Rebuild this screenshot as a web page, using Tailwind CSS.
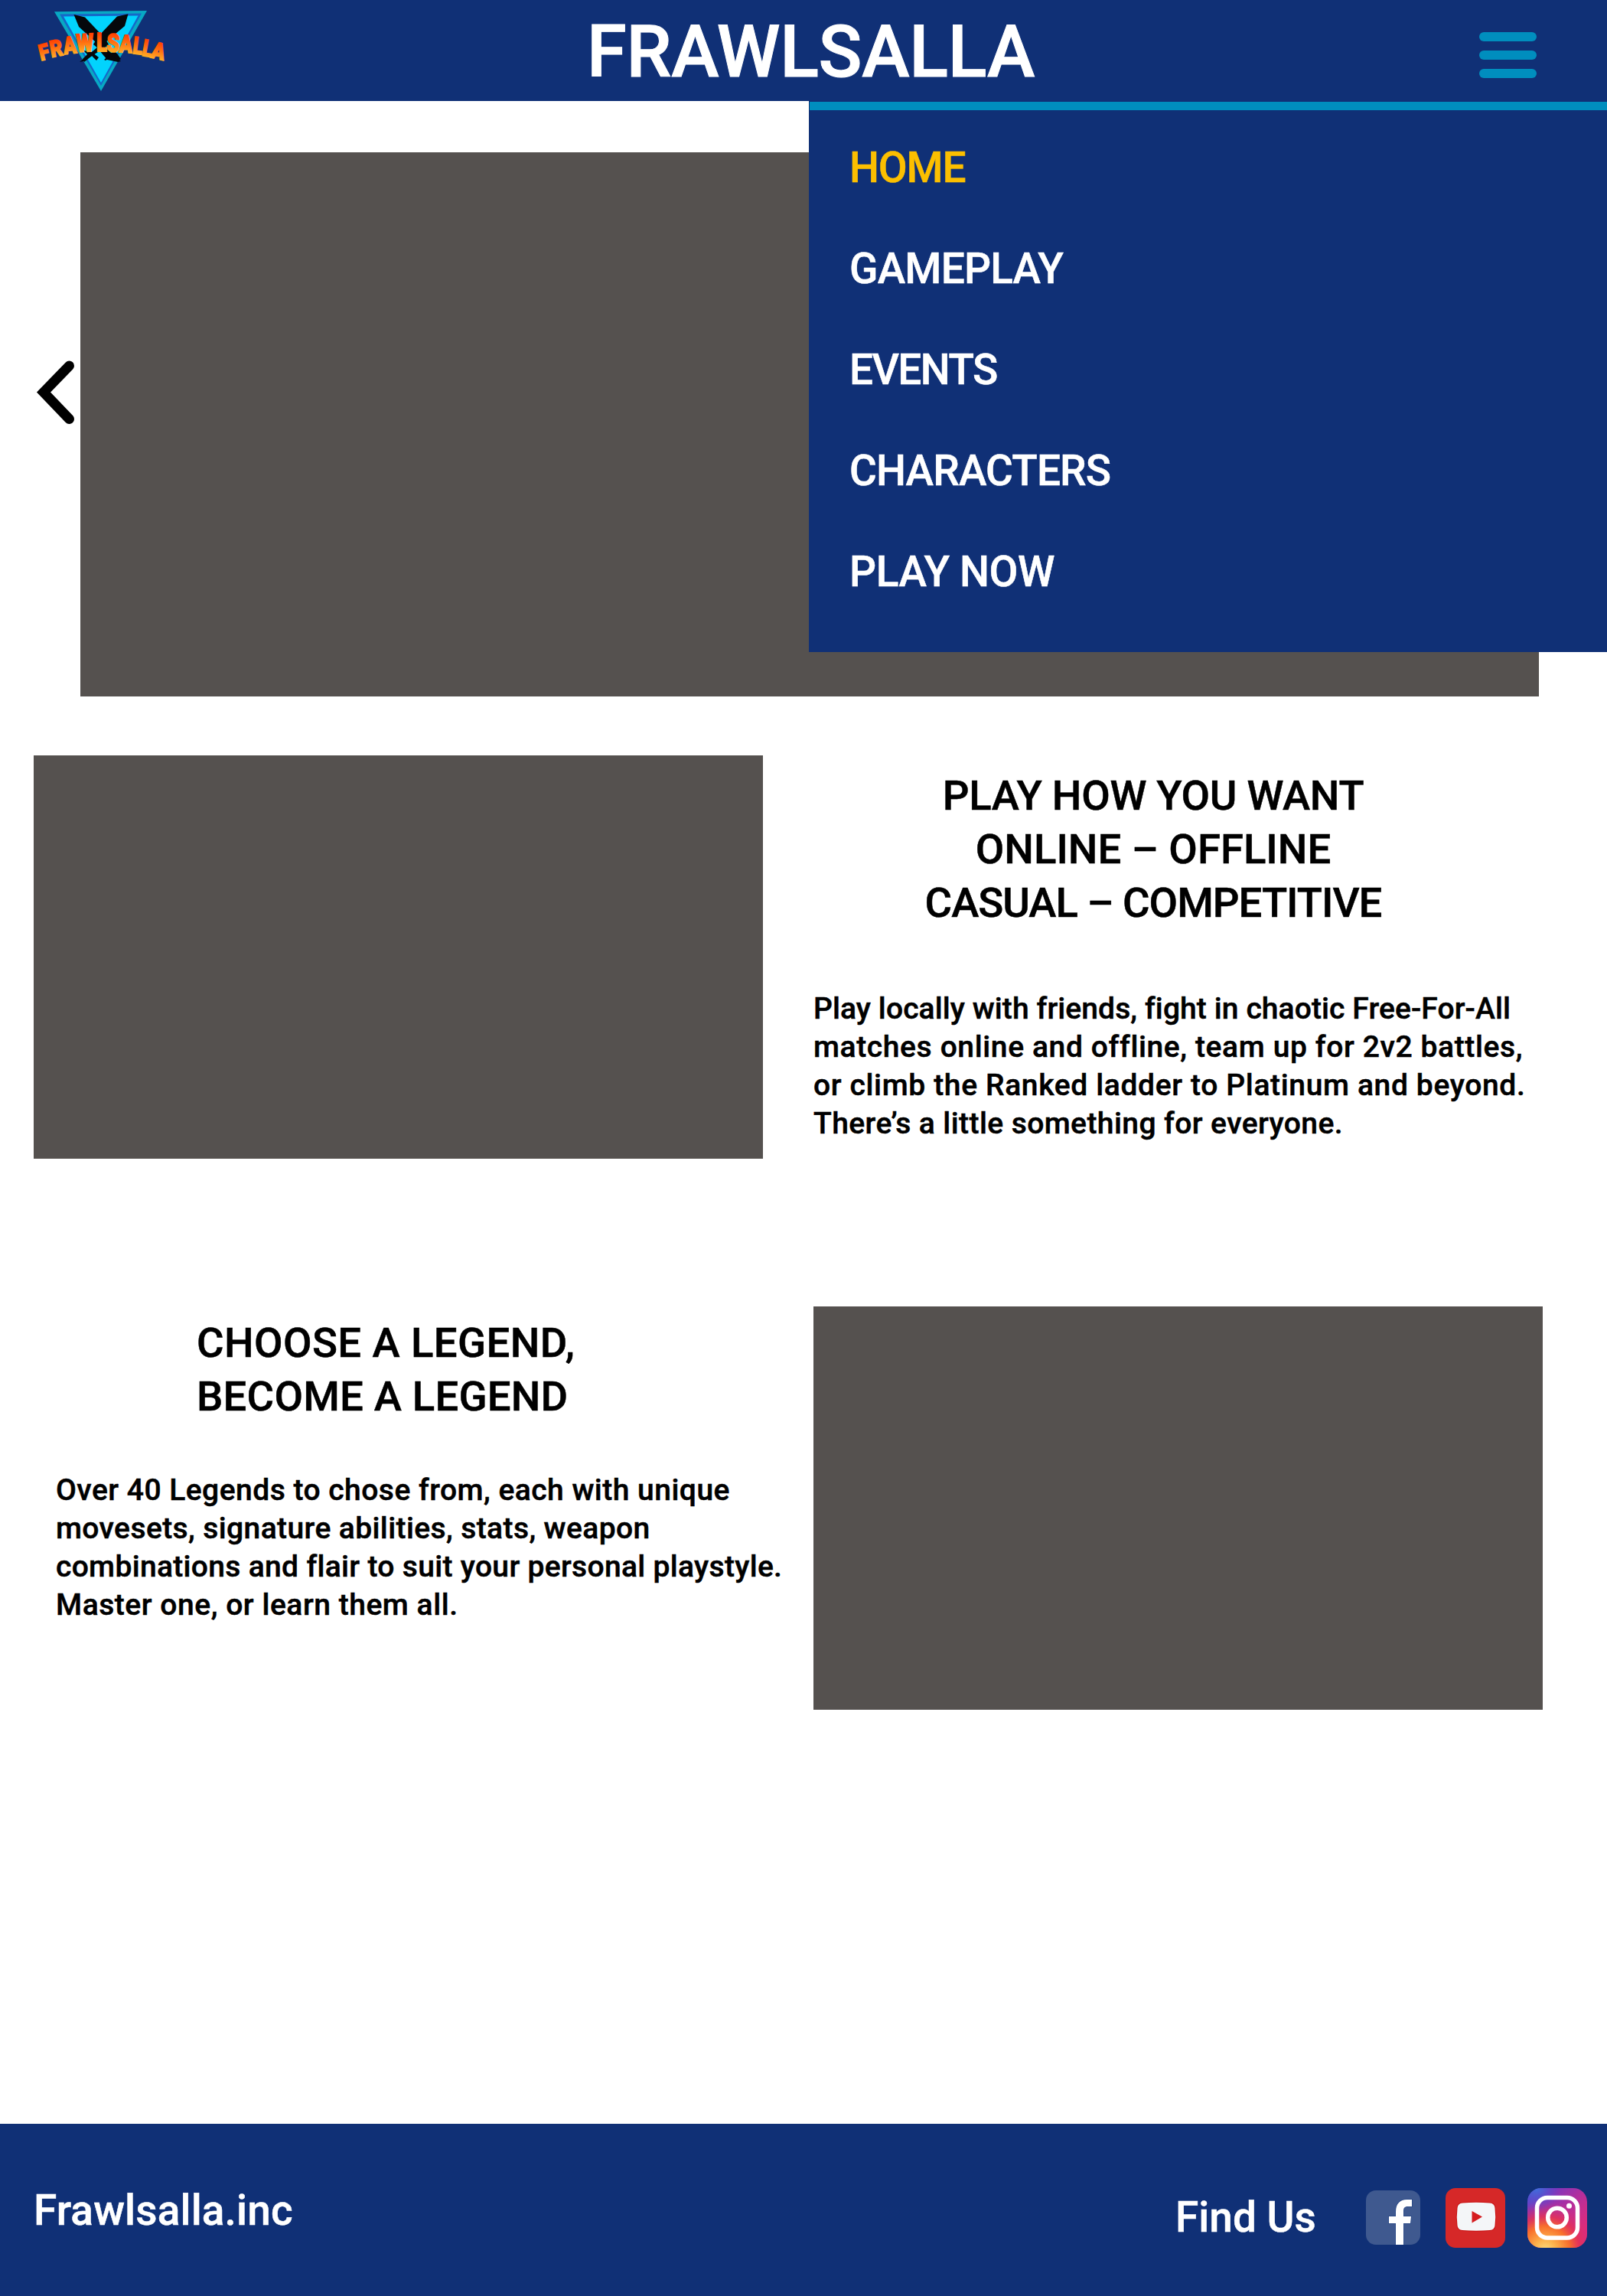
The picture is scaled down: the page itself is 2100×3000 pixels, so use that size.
<!DOCTYPE html>
<html lang="en">
<head>
<meta charset="utf-8">
<title>Frawlsalla</title>
<script src="https://cdn.jsdelivr.net/npm/@tailwindcss/browser@4"></script>
</head>
<body class="w-[2100px] h-[3000px] flex flex-col bg-white text-black font-['Roboto',sans-serif] font-medium [-webkit-text-stroke:0.5px_currentColor] overflow-x-hidden">

<header class="relative z-10 h-[132px] shrink-0 bg-[#103076] text-white flex items-start">
  <svg class="ml-[30px] w-[210px] h-[132px] shrink-0" viewBox="0 0 210 132" stroke="none">
    <defs>
      <linearGradient id="fire" gradientUnits="userSpaceOnUse" x1="0" y1="-24" x2="0" y2="2">
        <stop offset="0" stop-color="#ff3a00"/><stop offset=".45" stop-color="#ff6d10"/><stop offset="1" stop-color="#ffb428"/>
      </linearGradient>
    </defs>
    <path d="M41 15.2L162 14L102 119Z" fill="#08a9c4"/>
    <path d="M48 18.5L155 17.5L102 112Z" fill="#1668c8"/>
    <path d="M53 21.5L150.500 20.5L102 108Z" fill="#02d3fd"/>
    <g fill="#05080b">
      <path d="M66.500 19L81 22.5L107 50L112 58L105 64L95 55L73 35Z"/>
      <path d="M137.500 18.200L123 21.500L98 48L92 58L99 64L108 55L133 34Z"/>
      <path d="M107 62L128 80L124 81L110 78L100 66Z"/>
      <path d="M97 62L74 81L79 80L98 68Z"/>
      <path d="M79 66L90 68L99 75L96 79L90 73L80 81L78 77L84 71Z"/>
      <path d="M106 78L119 66L123 70L128 77L124 80L117 73L108 79Z"/>
    </g>
    <g fill="url(#fire)" stroke="url(#fire)" stroke-width="1.700" text-anchor="middle" font-family="Roboto, sans-serif" font-weight="900" font-size="31">
      <text transform="translate(30 78) rotate(-14) scale(.78 .94)">F</text>
      <text transform="translate(45.500 73.500) rotate(-11) scale(.82 .97)">R</text>
      <text transform="translate(62.500 70) rotate(-7) scale(.8 1)">A</text>
      <text transform="translate(81.500 67.500) rotate(-3) scale(.84 1.05)">W</text>
      <text transform="translate(103 67) scale(.8 1.05)">L</text>
      <text transform="translate(117.500 67.500) rotate(2) scale(.86 1.05)">S</text>
      <text transform="translate(134 68.500) rotate(4) scale(.82 1.03)">A</text>
      <text transform="translate(149 70.500) rotate(7) scale(.76 1)">L</text>
      <text transform="translate(161 73.500) rotate(10) scale(.76 .98)">L</text>
      <text transform="translate(175 77) rotate(13) scale(.84 .97)">A</text>
    </g>
  </svg>
  <h1 class="ml-[527px] text-[94px] leading-[136px] tracking-[-0.3px] whitespace-nowrap [-webkit-text-stroke:1px_currentColor]">FRAWLSALLA</h1>
  <button class="ml-auto mr-[92px] mt-[42px] w-[75px] flex flex-col gap-3" aria-label="Menu">
    <span class="h-3 rounded-full bg-[#008ebe]"></span>
    <span class="h-3 rounded-full bg-[#008ebe]"></span>
    <span class="h-3 rounded-full bg-[#008ebe]"></span>
  </button>
  <nav class="absolute right-0 top-[132px] w-[1043px] h-[720px] pl-px pt-px bg-[#103076] text-[55px] leading-[132px]">
    <div class="h-[11px] bg-[#008ebe]"></div>
    <ul class="pt-[9px] pl-[52px]">
      <li class="text-[#fcbf00] tracking-[-1.2px]">HOME</li>
      <li class="tracking-[-0.8px]">GAMEPLAY</li>
      <li class="tracking-[-1.6px]">EVENTS</li>
      <li class="tracking-[-0.9px]">CHARACTERS</li>
      <li class="tracking-[-0.4px]">PLAY NOW</li>
    </ul>
  </nav>
</header>

<main class="flex-1 flex flex-col">
  <section class="mt-[67px] flex items-start">
    <svg class="ml-[45px] mt-[270px] w-[60px] h-[90px] shrink-0" viewBox="0 0 60 90" fill="none" stroke="#000" stroke-width="13" stroke-linecap="round">
      <path d="M45.500 9L12 43.500L45.500 78.500"/>
    </svg>
    <div class="w-[1906px] h-[711px] bg-[#55514f]"></div>
  </section>

  <section class="mt-[77px] ml-[44px] flex items-start">
    <div class="w-[953px] h-[527px] shrink-0 bg-[#55514f]"></div>
    <div class="ml-[66px] pt-[17px]">
      <h2 class="w-[888px] text-center text-[54.5px] leading-[70px]">
        <span class="block tracking-[-0.3px]">PLAY HOW YOU WANT</span>
        <span class="block">ONLINE – OFFLINE</span>
        <span class="block tracking-[-1px]">CASUAL – COMPETITIVE</span>
      </h2>
      <p class="mt-[79px] text-[39px] leading-[50px] whitespace-nowrap">
        <span class="block tracking-[0.1px]">Play locally with friends, fight in chaotic Free-For-All</span>
        <span class="block tracking-[0.62px]">matches online and offline, team up for 2v2 battles,</span>
        <span class="block tracking-[0.64px]">or climb the Ranked ladder to Platinum and beyond.</span>
        <span class="block tracking-[0.42px]">There’s a little something for everyone.</span>
      </p>
    </div>
  </section>

  <section class="mt-[193px] ml-[73px] flex items-start">
    <div class="w-[990px] shrink-0 pt-[12px]">
      <h2 class="pl-[184px] text-[54.5px] leading-[70px] whitespace-nowrap">
        <span class="block tracking-[0.4px]">CHOOSE A LEGEND,</span>
        <span class="block tracking-[0.2px]">BECOME A LEGEND</span>
      </h2>
      <p class="mt-[63px] text-[39px] leading-[50px] whitespace-nowrap">
        <span class="block tracking-[0.48px]">Over 40 Legends to chose from, each with unique</span>
        <span class="block tracking-[0.4px]">movesets, signature abilities, stats, weapon</span>
        <span class="block tracking-[0.32px]">combinations and flair to suit your personal playstyle.</span>
        <span class="block tracking-[0.54px]">Master one, or learn them all.</span>
      </p>
    </div>
    <div class="w-[953px] h-[527px] shrink-0 bg-[#55514f]"></div>
  </section>
</main>

<footer class="h-[225px] shrink-0 bg-[#103076] text-white flex items-start pl-[44px] pr-[26px] text-[55px] leading-[70px]">
  <div class="mt-[78px] tracking-[0.14px]">Frawlsalla.inc</div>
  <div class="ml-auto mt-[87px] w-[249px]">Find Us</div>
  <svg class="mt-[87px] w-[71px] h-[71px]" viewBox="0 0 71 71" stroke="none">
    <rect width="71" height="71" rx="13" fill="#3f598f"/>
    <path d="M39 71V43H30V34H39V28C39 17 45 12 53 12H60V21H55C50 21 49 23 49 28V34H59L58 43H49V71Z" fill="#fff" stroke="#284786" stroke-width="1.500" paint-order="stroke"/>
  </svg>
  <svg class="ml-[33px] mt-[84px] w-[78px] h-[78px]" viewBox="0 0 78 78" stroke="none">
    <rect width="78" height="78" rx="13" fill="#d62828"/>
    <path d="M22 19.500Q40 18 58 19.500Q64 20 64.500 26Q66 38 64.500 49Q64 54.500 58 55Q40 56.500 22 55Q16 54.500 15.500 49Q14 38 15.500 26Q16 20 22 19.500Z" fill="#f4f6f8" stroke="#c81010" stroke-width="2" paint-order="stroke"/>
    <path d="M34.500 30L48 37.500L34.500 45.500Z" fill="#d51c1f"/>
  </svg>
  <svg class="ml-[29px] mt-[84px] w-[78px] h-[78px]" viewBox="0 0 78 78" fill="none" stroke="none">
    <defs>
      <linearGradient id="igBase" x1="0" y1="0" x2="1" y2="1">
        <stop offset="0" stop-color="#4a4fd0"/><stop offset=".22" stop-color="#7c35be"/><stop offset=".5" stop-color="#b52f9c"/><stop offset=".8" stop-color="#dc2c7c"/>
      </linearGradient>
      <radialGradient id="igWarm" cx=".3" cy="1.050" r=".85">
        <stop offset="0" stop-color="#ffdf80"/><stop offset=".22" stop-color="#fdb24b"/><stop offset=".48" stop-color="#f8702c"/><stop offset=".68" stop-color="#e63254" stop-opacity=".85"/><stop offset="1" stop-color="#d02c88" stop-opacity="0"/>
      </radialGradient>
      <radialGradient id="igBlue" cx=".15" cy="0" r=".4">
        <stop offset="0" stop-color="#3f6fdc"/><stop offset="1" stop-color="#5a48cc" stop-opacity="0"/>
      </radialGradient>
    </defs>
    <rect width="78" height="78" rx="18" fill="url(#igBase)"/>
    <rect width="78" height="78" rx="18" fill="url(#igWarm)"/>
    <rect width="78" height="78" rx="18" fill="url(#igBlue)"/>
    <rect x="12.500" y="12.500" width="53" height="52.500" rx="13.500" stroke="#fff" stroke-width="5.500"/>
    <circle cx="39" cy="38.500" r="12.300" stroke="#fff" stroke-width="5.500"/>
    <circle cx="54.500" cy="23.200" r="3.500" fill="#fff"/>
  </svg>
</footer>
</body>
</html>
